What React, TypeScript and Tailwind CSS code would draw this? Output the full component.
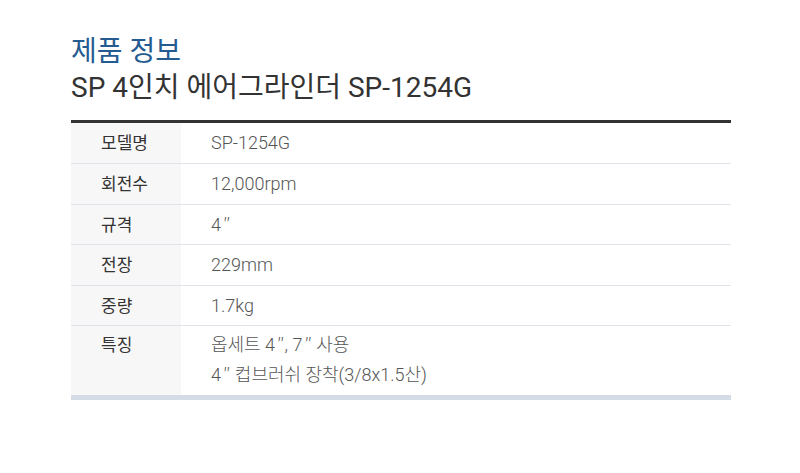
const rows: { label: string; value: string[] }[] = [
  { label: "모델명", value: ["SP-1254G"] },
  { label: "회전수", value: ["12,000rpm"] },
  { label: "규격", value: ["4″"] },
  { label: "전장", value: ["229mm"] },
  { label: "중량", value: ["1.7kg"] },
  { label: "특징", value: ["옵세트 4″, 7″ 사용", "4″ 컵브러쉬 장착(3/8x1.5산)"] },
]

// padding per row, matches the 41/40px rhythm of the original table
const pad = ["py-[5px]", "py-[5px]", "pt-[5px] pb-[4px]", "py-[5px]", "pt-[5px] pb-[4px]", "pt-[4px] pb-[5px]"]

// render the double prime with the CJK face, as the source page does
function Text({ s }: { s: string }) {
  const parts = s.split("″")
  return (
    <>
      {parts.map((p, i) => (
        <span key={i}>
          {p}
          {i < parts.length - 1 && (
            <span className="font-['Noto_Sans_CJK_KR'] leading-none pl-[2px]">″</span>
          )}
        </span>
      ))}
    </>
  )
}

export default function App() {
  return (
    <div
      className="w-[800px] h-[473px] bg-white px-[71px] pt-[35px]"
      style={{ fontFamily: 'Roboto, "Noto Sans CJK KR", sans-serif' }}
    >
      {/* Heading */}
      <h1 className="text-[28px] leading-[34px] text-[#245b91]">제품 정보</h1>
      <h2 className="text-[28px] leading-[38px] text-[#333333]">SP 4인치 에어그라인더 SP-1254G</h2>

      {/* Spec table */}
      <div className="mt-[13px] w-[660px] border-t-[3px] border-[#333333] border-b-[5px] border-b-[#d5dce5]">
        {rows.map((row, i) => {
          const last = i === rows.length - 1
          return (
            <div
              key={row.label}
              className={`flex leading-[30px] ${last ? "" : "border-b border-[#dfe4ea]"}`}
            >
              <div className={`w-[110px] shrink-0 bg-[#f7f7f7] pl-[30px] text-[17px] text-[#333333] ${pad[i]}`}>
                {row.label}
              </div>
              <div className={`pl-[30px] text-[18px] text-[#555555] font-light ${pad[i]}`}>
                {row.value.map((v) => (
                  <div key={v} className="h-[30px]">
                    <Text s={v} />
                  </div>
                ))}
              </div>
            </div>
          )
        })}
      </div>
    </div>
  )
}
